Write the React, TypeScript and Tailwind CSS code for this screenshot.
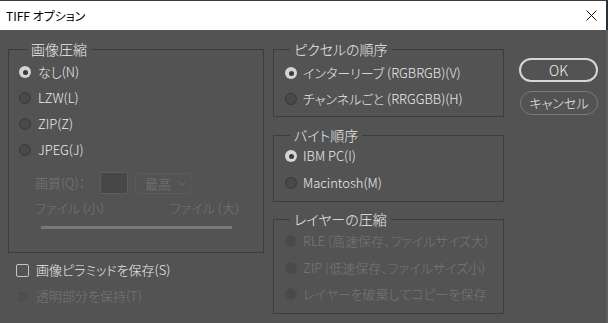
import React from "react";

const FONT = "font-['Noto_Sans_CJK_JP',sans-serif] font-light [font-feature-settings:'palt']";

function Radio({ checked, disabled }: { checked?: boolean; disabled?: boolean }) {
  if (checked) {
    return (
      <span className="w-[12px] h-[12px] rounded-full bg-[#d4d4d4] flex items-center justify-center shrink-0">
        <span className="w-[5px] h-[5px] rounded-full bg-[#3a3a3a]" />
      </span>
    );
  }
  if (disabled) {
    return <span className="w-[12px] h-[12px] rounded-full bg-[#4a4a4a] border border-[#4c4c4c] shrink-0" />;
  }
  return <span className="w-[12px] h-[12px] rounded-full bg-[#494949] border border-[#393939] shrink-0" />;
}

function Row({
  children,
  checked,
  disabled,
  cls,
}: {
  children: React.ReactNode;
  checked?: boolean;
  disabled?: boolean;
  cls: string;
}) {
  return (
    <div className={`h-[22px] flex items-center ${cls}`}>
      <Radio checked={checked} disabled={disabled} />
      <span className={`text-[13px] leading-[22px] whitespace-nowrap ${disabled ? "text-[#777777]" : "text-[#ececec]"}`}>
        {children}
      </span>
    </div>
  );
}

export default function App() {
  return (
    <div className={`w-[608px] h-[323px] flex flex-col overflow-hidden ${FONT}`}>
      {/* Title bar */}
      <div className="h-[30px] bg-white border-t border-[#3c3c3c] border-r-2 border-r-[#25323a] flex items-center justify-between pl-[6px] pr-[9px] shrink-0">
        <span className="text-[12px] leading-[16px] text-black font-normal">TIFF オプション</span>
        <svg width="11" height="11" viewBox="0 0 11 11" className="mb-[1px]">
          <path d="M0.5 0.5 L10.5 10.5 M10.5 0.5 L0.5 10.5" stroke="#111" strokeWidth="1" />
        </svg>
      </div>

      {/* Body */}
      <div className="flex-1 bg-[#535353] border-r-2 border-r-[#5e5e5e] flex pt-[10px] pl-[8px]">
        {/* Left column */}
        <div className="w-[256px] flex flex-col">
          <fieldset className="h-[213px] border border-[#3d3d3d] px-0 m-0">
            <legend className="ml-[18px] px-[4px] text-[14px] leading-[18px] text-[#ececec]">画像圧縮</legend>
            <div className="flex flex-col pt-[3px]">
              <Row checked cls="pl-[10px] gap-[7px]">なし(N)</Row>
              <Row cls="pl-[10px] gap-[7px] mt-[4px]">LZW(L)</Row>
              <Row cls="pl-[10px] gap-[7px] mt-[4px]">ZIP(Z)</Row>
              <Row cls="pl-[10px] gap-[7px] mt-[4px]">JPEG(J)</Row>

              <div className="h-[22px] mt-[11px] pl-[26px] flex items-center">
                <span className="w-[65px] text-[13px] leading-[22px] text-[#777777] whitespace-nowrap">画質(Q)：</span>
                <span className="w-[28px] h-[22px] border border-[#5d5d5d] bg-[#474747]" />
                <span className="ml-[7px] w-[56px] h-[21px] border border-[#5a5a5a] rounded-[3px] flex items-center pl-[9px] pr-[4px] justify-between">
                  <span className="text-[13px] leading-[19px] text-[#777777]">最高</span>
                  <svg width="8" height="5" viewBox="0 0 8 5">
                    <path d="M0.5 0.5 L4 4 L7.5 0.5" stroke="#6a6a6a" strokeWidth="1" fill="none" />
                  </svg>
                </span>
              </div>

              <div className="h-[16px] mt-[6px] ml-[26px] w-[204px] flex items-center justify-between">
                <span className="text-[13px] leading-[16px] text-[#777777] whitespace-nowrap">ファイル (小)</span>
                <span className="text-[13px] leading-[16px] text-[#777777] whitespace-nowrap">ファイル (大)</span>
              </div>

              <div className="mt-[10px] ml-[32px] w-[191px] h-[3px] bg-[#787878]" />
            </div>
          </fieldset>

          <div className="h-[20px] mt-[7px] pl-[8px] flex items-center gap-[7px]">
            <span className="w-[13px] h-[13px] rounded-[2px] border border-[#c4c4c4] bg-[#535353] shrink-0" />
            <span className="text-[13px] leading-[20px] text-[#ececec] whitespace-nowrap">画像ピラミッドを保存(S)</span>
          </div>
          <div className="h-[20px] mt-[6px] pl-[8px] flex items-center gap-[7px]">
            <span className="w-[13px] h-[13px] rounded-[2px] border border-[#575757] bg-[#4f4f4f] shrink-0" />
            <span className="text-[13px] leading-[20px] text-[#777777] whitespace-nowrap">透明部分を保持(T)</span>
          </div>
        </div>

        {/* Right column */}
        <div className="w-[231px] ml-[9px] flex flex-col">
          <fieldset className="h-[77px] border border-[#3d3d3d] px-0 m-0">
            <legend className="ml-[16px] px-[4px] text-[14px] leading-[18px] text-[#ececec]">ピクセルの順序</legend>
            <div className="flex flex-col pt-[4px]">
              <Row checked cls="pl-[11px] gap-[6px]">インターリーブ (RGBRGB)(V)</Row>
              <Row cls="pl-[11px] gap-[6px] mt-[4px]">チャンネルごと (RRGGBB)(H)</Row>
            </div>
          </fieldset>

          <fieldset className="h-[76px] mt-[9px] border border-[#3d3d3d] px-0 m-0">
            <legend className="ml-[16px] px-[4px] text-[14px] leading-[18px] text-[#ececec]">バイト順序</legend>
            <div className="flex flex-col pt-[1px]">
              <Row checked cls="pl-[11px] gap-[6px]">IBM PC(I)</Row>
              <Row cls="pl-[11px] gap-[6px] mt-[5px]">Macintosh(M)</Row>
            </div>
          </fieldset>

          <fieldset className="h-[104px] mt-[8px] border border-[#3d3d3d] px-0 m-0">
            <legend className="ml-[16px] px-[4px] text-[14px] leading-[18px] text-[#ececec]">レイヤーの圧縮</legend>
            <div className="flex flex-col pt-[2px]">
              <Row disabled cls="pl-[11px] gap-[6px]">RLE (高速保存、ファイルサイズ大)</Row>
              <Row disabled cls="pl-[11px] gap-[6px] mt-[5px]">ZIP (低速保存、ファイルサイズ小)</Row>
              <Row disabled cls="pl-[11px] gap-[6px] mt-[4px]">レイヤーを破棄してコピーを保存</Row>
            </div>
          </fieldset>
        </div>

        {/* Buttons */}
        <div className="ml-[15px] flex flex-col pt-[18px]">
          <button className="w-[79px] h-[24px] rounded-full border-2 border-[#d6d6d6] text-[14px] leading-[20px] text-[#f2f2f2] flex items-center justify-center">
            OK
          </button>
          <button className="w-[78px] h-[24px] mt-[9px] ml-[1px] rounded-full border border-[#7a7a7a] text-[13px] leading-[20px] text-[#ececec] flex items-center justify-center">
            キャンセル
          </button>
        </div>
      </div>
    </div>
  );
}
